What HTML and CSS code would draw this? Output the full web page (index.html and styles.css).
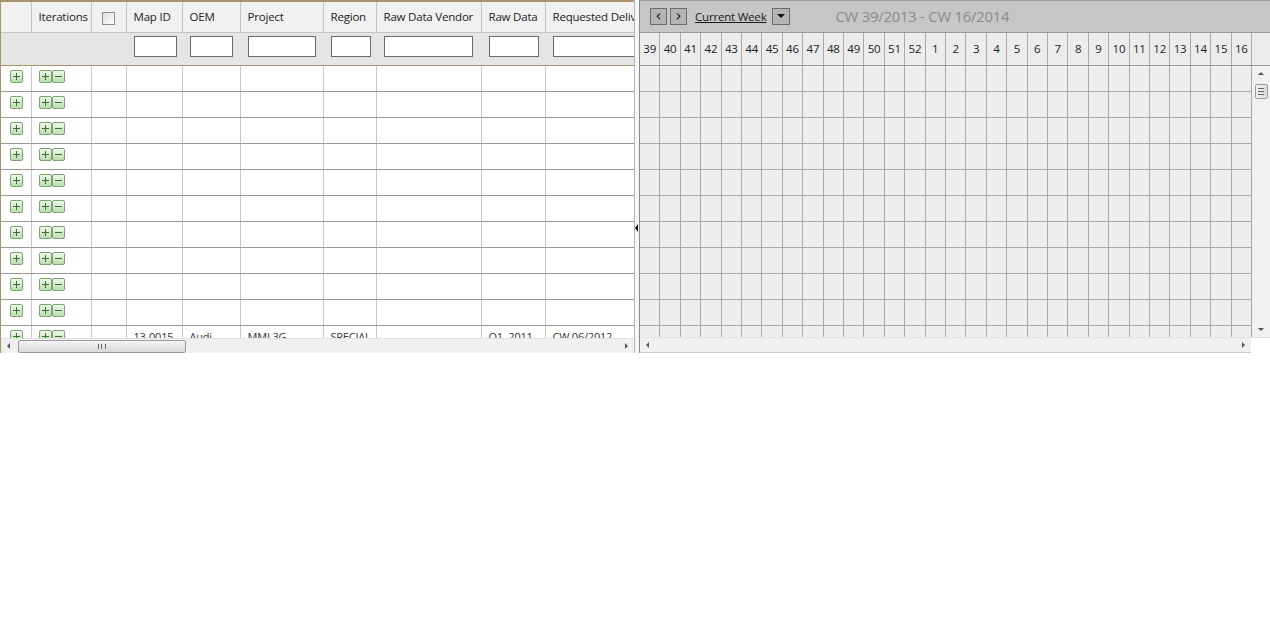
FILE: index.html
```html
<!DOCTYPE html>
<html lang="en">
<head>
    <meta charset="UTF-8">
    <title>Map Planning</title>
    <link rel="stylesheet" href="styles.css">
</head>
<body>
<div class="app">
    <div class="left-pane">
        <div class="grid-view">
            <table class="grid">
                <colgroup>
                    <col style="width:30px"><col style="width:60px"><col style="width:35px">
                    <col style="width:56px"><col style="width:58px"><col style="width:83px">
                    <col style="width:53px"><col style="width:105px"><col style="width:64px">
                    <col style="width:110px">
                </colgroup>
                <thead>
                <tr class="head-row">
                    <th></th>
                    <th>Iterations</th>
                    <th class="center"><span class="check"></span></th>
                    <th>Map ID</th>
                    <th>OEM</th>
                    <th>Project</th>
                    <th>Region</th>
                    <th>Raw Data Vendor</th>
                    <th>Raw Data</th>
                    <th>Requested Delivery</th>
                </tr>
                <tr class="filter-row">
                    <td></td>
                    <td></td>
                    <td></td>
                    <td><input class="filter w43"></td>
                    <td><input class="filter w43"></td>
                    <td><input class="filter w68"></td>
                    <td><input class="filter w40"></td>
                    <td><input class="filter w89"></td>
                    <td><input class="filter w50"></td>
                    <td><input class="filter w100"></td>
                </tr>
                </thead>
                <tbody id="rows"></tbody>
            </table>
        </div>
        <div class="hscroll">
            <span class="arr arr-left"></span>
            <span class="track"><span class="thumb left-thumb"><span class="grip"></span></span></span>
            <span class="arr arr-right"></span>
        </div>
    </div>

    <div class="splitter"><span class="split-arrow"></span></div>

    <div class="right-pane">
        <div class="toolbar">
            <button class="nav-btn">&lsaquo;</button>
            <button class="nav-btn">&rsaquo;</button>
            <a class="current-week" href="#">Current Week</a>
            <button class="drop-btn"><span class="drop-arrow"></span></button>
            <span class="range">CW 39/2013 - CW 16/2014</span>
        </div>
        <div class="weeks-head">
            <div class="weeks" id="weeks"></div>
            <div class="weeks-pad"></div>
        </div>
        <div class="chart-body">
            <div class="cells" id="cells"></div>
            <div class="vscroll">
                <span class="arr arr-up"></span>
                <span class="vthumb"><span class="vgrip"></span></span>
                <span class="vtrack"></span>
                <span class="arr arr-down"></span>
            </div>
        </div>
        <div class="hscroll right-scroll">
            <span class="arr arr-left"></span>
            <span class="track"></span>
            <span class="arr arr-right"></span>
            <span class="corner"></span>
        </div>
    </div>
</div>
<script>
    const rows = document.getElementById("rows");
    const last = ["13-0015", "Audi", "MMI 3G", "SPECIAL", "", "Q1. 2011", "CW 06/2012"];

    for (let i = 0; i < 11; i++) {
        const tr = document.createElement("tr");
        tr.className = "data-row";
        let html = '<td><span class="ico plus"></span></td>' +
            '<td><span class="ico plus"></span><span class="ico minus"></span></td><td></td>';
        for (let c = 0; c < 7; c++) {
            html += "<td>" + (i === 10 ? last[c] : "") + "</td>";
        }
        tr.innerHTML = html;
        rows.appendChild(tr);
    }

    // week numbers 39..52 then 1..16
    const weeks = document.getElementById("weeks");
    const cells = document.getElementById("cells");
    const nums = [];
    for (let w = 39; w <= 52; w++) nums.push(w);
    for (let w = 1; w <= 16; w++) nums.push(w);
    nums.forEach(function (n) {
        const d = document.createElement("div");
        d.className = "week";
        d.textContent = n;
        weeks.appendChild(d);
    });
    for (let i = 0; i < 11 * nums.length; i++) {
        const d = document.createElement("div");
        d.className = "cell";
        cells.appendChild(d);
    }
</script>
</body>
</html>
```

FILE: styles.css
```css
body {
    margin: 0;
    padding: 0;
    background-color: #ffffff;
    font-family: "Open Sans", Arial, sans-serif;
    font-size: 11.5px;
    letter-spacing: -0.2px;
    color: #222;
}

.app {
    display: flex;
    width: 1270px;
    height: 353px;
}

/* ---------- left grid ---------- */
.left-pane {
    width: 633px;
    height: 351px;
    border-top: 2px solid #a8936f;
    border-left: 1px solid #a8936f;
    border-bottom: 1px solid #a8936f;
    display: flex;
    flex-direction: column;
    overflow: hidden;
}

.grid-view {
    height: 336px;
    overflow: hidden;
}

.grid {
    border-collapse: collapse;
    table-layout: fixed;
    width: 654px;
}

.grid th,
.grid td {
    padding: 0 0 0 7px;
    text-align: left;
    white-space: nowrap;
    overflow: hidden;
}

.head-row th {
    height: 29px;
    padding-bottom: 1px;
    background-color: #f1f1f1;
    font-weight: normal;
    border-right: 1px solid #c4c4c4;
    border-bottom: 1px solid #c4c4c4;
}

.head-row th.center {
    padding: 0;
    text-align: center;
}

.check {
    display: inline-block;
    width: 11px;
    height: 11px;
    border: 1px solid #8e8f8f;
    background: linear-gradient(135deg, #dcdcdc, #ffffff);
    vertical-align: middle;
}

.filter-row td {
    height: 29px;
    padding-top: 3px;
    vertical-align: top;
    background-color: #e5e5e5;
    border-bottom: 1px solid #a8936f;
    padding-left: 8px;
}

.filter {
    display: block;
    height: 19px;
    padding: 0;
    border: 1px solid #6a6a6a;
    background: #fff;
    box-sizing: content-box;
}

.w43 { width: 41px; }
.w68 { width: 66px; }
.w40 { width: 38px; }
.w89 { width: 87px; }
.w50 { width: 48px; }
.w100 { width: 98px; }

.data-row td {
    height: 21px;
    border-right: 1px solid #c8c8c8;
    border-bottom: 1px solid #9a9a9a;
    background-color: #fff;
    vertical-align: top;
    padding-top: 4px;
    padding-left: 7px;
    line-height: 14px;
    font-size: 11px;
    color: #333;
}

.data-row td:first-child {
    padding-left: 9px;
}

.ico {
    position: relative;
    display: inline-block;
    width: 11px;
    height: 11px;
    border: 1px solid #7aa56f;
    border-radius: 2px;
    background: linear-gradient(#f0f8ec, #bcdcb0);
    vertical-align: top;
}

.ico::before {
    content: "";
    position: absolute;
    left: 2px;
    top: 5px;
    width: 7px;
    height: 1px;
    background: #3f6d36;
}

.plus::after {
    content: "";
    position: absolute;
    left: 5px;
    top: 2px;
    width: 1px;
    height: 7px;
    background: #3f6d36;
}

/* ---------- scrollbars ---------- */
.hscroll {
    height: 14px;
    display: flex;
    align-items: center;
    background-color: #f0f0f0;
    border-top: 1px solid #e2e2e2;
}

.track {
    flex: 1;
    height: 100%;
    display: flex;
    align-items: center;
}

.thumb {
    height: 11px;
    border: 1px solid #9c9c9c;
    border-radius: 2px;
    background: linear-gradient(#f4f4f4, #d9d9d9);
    display: flex;
    align-items: center;
    justify-content: center;
}

.left-thumb {
    width: 166px;
    margin-left: 2px;
}

.grip {
    width: 6px;
    height: 5px;
    border-left: 1px solid #666;
    border-right: 1px solid #666;
    background: linear-gradient(to right, transparent 2px, #666 2px, #666 3px, transparent 3px);
}

.arr {
    width: 0;
    height: 0;
    margin: 0 6px;
    border: 3px solid transparent;
}

.arr-left {
    border-right: 3px solid #555;
    border-left-width: 0;
}

.arr-right {
    border-left: 3px solid #555;
    border-right-width: 0;
}

.arr-up {
    border-bottom: 3px solid #555;
    border-top-width: 0;
    margin: 6px auto;
}

.arr-down {
    border-top: 3px solid #555;
    border-bottom-width: 0;
    margin: 6px auto;
}

/* ---------- splitter ---------- */
.splitter {
    width: 4px;
    height: 353px;
    background-color: #f7f7f7;
    border-left: 1px solid #b5b5b5;
    border-right: 1px solid #8a8a8a;
    display: flex;
    align-items: center;
}

.split-arrow {
    width: 0;
    height: 0;
    border-top: 4px solid transparent;
    border-bottom: 4px solid transparent;
    border-right: 3px solid #111;
    margin-top: 103px;
}

/* ---------- right chart ---------- */
.right-pane {
    flex: 1;
    display: flex;
    flex-direction: column;
    height: 353px;
}

.toolbar {
    height: 31px;
    background-color: #c6c6c6;
    border-top: 1px solid #9a9a9a;
    display: flex;
    align-items: center;
    padding-left: 10px;
}

.nav-btn,
.drop-btn {
    width: 17px;
    height: 17px;
    padding: 0;
    margin-right: 3px;
    border: 1px solid #6c6c6c;
    background-color: #b4b4b4;
    font-family: "DejaVu Sans", sans-serif;
    font-size: 15px;
    line-height: 13px;
    color: #111;
}

.current-week {
    margin: 0 6px 0 5px;
    color: #1a1a1a;
    text-decoration: underline;
}

.drop-btn {
    width: 18px;
    display: flex;
    align-items: center;
    justify-content: center;
}

.drop-arrow {
    width: 0;
    height: 0;
    border-left: 4px solid transparent;
    border-right: 4px solid transparent;
    border-top: 4px solid #111;
}

.range {
    margin-left: 42px;
    font-size: 14.8px;
    color: #8a8a8a;
}

.weeks-head {
    display: flex;
    height: 32px;
    background-color: #ececec;
    border-top: 1px solid #9a9a9a;
    border-bottom: 1px solid #9a9a9a;
}

.weeks {
    width: 612px;
    display: grid;
    grid-template-columns: repeat(30, 1fr);
}

.week {
    border-right: 1px solid #a8a8a8;
    text-align: center;
    line-height: 31px;
    color: #222;
}

.weeks-pad {
    flex: 1;
}

.chart-body {
    display: flex;
    height: 272px;
    overflow: hidden;
}

.cells {
    width: 612px;
    display: grid;
    grid-template-columns: repeat(30, 1fr);
    grid-auto-rows: 26px;
    background-color: #eeeeee;
}

.cell {
    border-right: 1px solid #a8a8a8;
    border-bottom: 1px solid #a8a8a8;
}

.vscroll {
    flex: 1;
    background-color: #f1f1f1;
    display: flex;
    flex-direction: column;
}

.vthumb {
    width: 11px;
    height: 13px;
    margin: 3px auto 0;
    border: 1px solid #9c9c9c;
    border-radius: 2px;
    background: linear-gradient(to right, #f4f4f4, #dadada);
    display: flex;
    align-items: center;
    justify-content: center;
}

.vgrip {
    width: 6px;
    height: 5px;
    border-top: 1px solid #666;
    border-bottom: 1px solid #666;
    background: linear-gradient(transparent 2px, #666 2px, #666 3px, transparent 3px);
}

.vtrack {
    flex: 1;
}

.right-scroll {
    border-bottom: 1px solid #c3cad4;
}

.right-scroll .corner {
    width: 19px;
    height: 15px;
    background-color: #fff;
}

.right-scroll .arr-left {
    margin-left: 6px;
}
```
